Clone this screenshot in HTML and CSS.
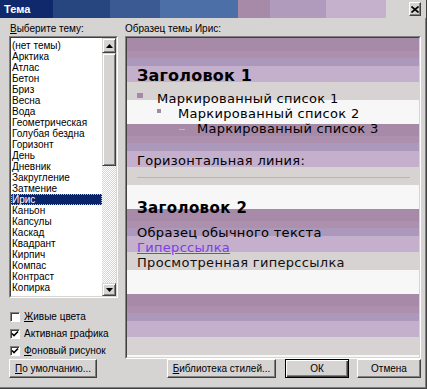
FILE: index.html
```html
<!DOCTYPE html>
<html lang="ru">
<head>
<meta charset="utf-8">
<title>Тема</title>
<link rel="stylesheet" href="styles.css">
</head>
<body>
<div class="window">
  <div class="titlebar">
    <span class="title">Тема</span>
    <span class="close"><svg width="8" height="7" viewBox="0 0 8 7"><path d="M0.5 0.5 L7.5 6.5 M7.5 0.5 L0.5 6.5" stroke="#000" stroke-width="1.6" fill="none"/></svg></span>
  </div>
  <div class="content">
    <div class="label label-left"><u>В</u>ыберите тему:</div>
    <div class="label">Образец темы Ирис:</div>

    <div class="left">
      <div class="listbox">
        <div class="listbox-inner">
          <ul class="items">
            <li>(нет темы)</li>
            <li>Арктика</li>
            <li>Атлас</li>
            <li>Бетон</li>
            <li>Бриз</li>
            <li>Весна</li>
            <li>Вода</li>
            <li>Геометрическая</li>
            <li>Голубая бездна</li>
            <li>Горизонт</li>
            <li>День</li>
            <li>Дневник</li>
            <li>Закругление</li>
            <li>Затмение</li>
            <li class="sel">Ирис</li>
            <li>Каньон</li>
            <li>Капсулы</li>
            <li>Каскад</li>
            <li>Квадрант</li>
            <li>Кирпич</li>
            <li>Компас</li>
            <li>Контраст</li>
            <li>Копирка</li>
          </ul>
          <div class="scrollbar">
            <div class="sb-btn sb-up"><svg width="7" height="4" viewBox="0 0 7 4"><path d="M3.5 0 L7 4 L0 4 Z" fill="#000"/></svg></div>
            <div class="sb-thumb"></div>
            <div class="sb-track"></div>
            <div class="sb-btn sb-down"><svg width="7" height="4" viewBox="0 0 7 4"><path d="M0 0 L7 0 L3.5 4 Z" fill="#000"/></svg></div>
          </div>
        </div>
      </div>
      <div class="checks">
        <div class="check"><span class="box"></span><span><u>Ж</u>ивые цвета</span></div>
        <div class="check"><span class="box"><svg width="8" height="8" viewBox="0 0 8 8"><path d="M1 3.5 L3 5.5 L7 1.5" stroke="#000" stroke-width="1.6" fill="none"/></svg></span><span>Активная <u>г</u>рафика</span></div>
        <div class="check"><span class="box"><svg width="8" height="8" viewBox="0 0 8 8"><path d="M1 3.5 L3 5.5 L7 1.5" stroke="#000" stroke-width="1.6" fill="none"/></svg></span><span><u>Ф</u>оновый рисунок</span></div>
      </div>
    </div>

    <div class="preview">
      <div class="preview-inner">
        <div class="h1">Заголовок 1</div>
        <div class="li li1"><span class="bullet"><i class="sq1"></i></span>Маркированный список 1</div>
        <div class="li li2"><span class="bullet"><i class="sq2"></i></span>Маркированный список 2</div>
        <div class="li li3"><span class="bullet"><i class="dash"></i></span>Маркированный список 3</div>
        <div class="hr-label">Горизонтальная линия:</div>
        <div class="hr"></div>
        <div class="h2">Заголовок 2</div>
        <div class="p">Образец обычного текста</div>
        <div class="p link">Гиперссылка</div>
        <div class="p visited">Просмотренная гиперссылка</div>
      </div>
    </div>

    <div class="bottom-left">
      <button class="btn btn-default-theme"><u>П</u>о умолчанию...</button>
    </div>
    <div class="bottom-right">
      <button class="btn btn-lib"><u>Б</u>иблиотека стилей...</button>
      <button class="btn btn-small is-default">ОК</button>
      <button class="btn btn-small">Отмена</button>
    </div>
  </div>
</div>
</body>
</html>
```

FILE: styles.css
```css
* {
  box-sizing: border-box;
  margin: 0;
  padding: 0;
}

html, body {
  width: 427px;
  height: 389px;
  overflow: hidden;
}

body {
  font-family: "Liberation Sans", Arial, sans-serif;
  font-size: 10px;
  color: #000;
  background: #d6d3d3;
}

.window {
  width: 427px;
  height: 389px;
  background: #d6d3d3;
  border-right: 1px solid #404040;
  border-bottom: 1px solid #404040;
  box-shadow: inset -1px -1px 0 #808080;
}

.titlebar {
  height: 18px;
  display: flex;
  align-items: center;
  padding: 0 5px 0 4px;
  background: linear-gradient(to right,
    #10296c 0 53px,
    #27457f 53px 110px,
    #3b5993 110px 160px,
    #4b6fa6 160px 238px,
    #a68aa8 238px 270px,
    #b09bbc 270px 326px,
    #c5b1cc 326px 386px,
    #d6d3d3 386px);
}

.title {
  color: #fff;
  font-weight: bold;
  font-size: 11px;
}

.close {
  margin-left: auto;
  width: 12px;
  height: 14px;
  display: flex;
  align-items: center;
  justify-content: center;
  background: #d6d3d3;
  border: 1px solid;
  border-color: #fff #404040 #404040 #fff;
  box-shadow: inset -1px -1px 0 #808080;
}

.content {
  display: grid;
  grid-template-columns: 109px 296px;
  grid-template-rows: 13px 323px 19px;
  column-gap: 7px;
  padding: 5px 0 0 9px;
}

.label {
  line-height: 12px;
  white-space: nowrap;
}

.label-left {
  padding-left: 1px;
}

.left {
  display: flex;
  flex-direction: column;
}

.listbox {
  height: 262px;
  display: flex;
  border: 1px solid;
  border-color: #808080 #fff #fff #808080;
}

.listbox-inner {
  flex: 1;
  display: flex;
  border: 1px solid;
  border-color: #404040 #d6d3d3 #d6d3d3 #404040;
  background: #fff;
}

.items {
  flex: 1;
  list-style: none;
  padding-top: 2px;
  overflow: hidden;
}

.items li {
  height: 11px;
  line-height: 11px;
  padding-left: 1px;
  white-space: nowrap;
}

.items li.sel {
  background: #0a246a;
  color: #fff;
  outline: 1px dotted #d8b860;
  outline-offset: -1px;
}

.scrollbar {
  width: 14px;
  display: flex;
  flex-direction: column;
}

.sb-btn {
  display: flex;
  align-items: center;
  justify-content: center;
  background: #d6d3d3;
  border: 1px solid;
  border-color: #d6d3d3 #404040 #404040 #d6d3d3;
  box-shadow: inset 1px 1px 0 #fff, inset -1px -1px 0 #808080;
}

.sb-up {
  height: 15px;
}

.sb-down {
  height: 13px;
}

.sb-thumb {
  height: 113px;
  background: #d6d3d3;
  border: 1px solid;
  border-color: #d6d3d3 #404040 #404040 #d6d3d3;
  box-shadow: inset 1px 1px 0 #fff, inset -1px -1px 0 #808080;
}

.sb-track {
  flex: 1;
  background-color: #fff;
  background-image: repeating-conic-gradient(#d6d3d3 0 25%, #fff 0 50%);
  background-size: 2px 2px;
}

.checks {
  margin-top: 10px;
  display: flex;
  flex-direction: column;
}

.check {
  height: 17px;
  display: flex;
  align-items: center;
  gap: 4px;
  padding-left: 1px;
  white-space: nowrap;
}

.box {
  width: 10px;
  height: 10px;
  display: flex;
  align-items: center;
  justify-content: center;
  background: #fff;
  border: 1px solid;
  border-color: #808080 #fff #fff #808080;
  box-shadow: inset 1px 1px 0 #404040;
}

.preview {
  border: 1px solid;
  border-color: #808080 #fff #fff #808080;
}

.preview-inner {
  height: 100%;
  border: 1px solid;
  border-color: #404040 #d6d3d3 #d6d3d3 #404040;
  padding: 0 9px 0 10px;
  font-family: "DejaVu Sans", Verdana, sans-serif;
  font-size: 13px;
  letter-spacing: 0.3px;
  color: #000;
  background:
    linear-gradient(#a68aa8, #a68aa8) 0 0 / 100% 1px no-repeat,
    repeating-linear-gradient(to bottom,
      #a68aa8 0 12px,
      #ad8fae 12px 19px,
      #ab98ba 19px 27px,
      #c4b0cc 27px 43px,
      #d8d3d3 43px 61px,
      #f7f7f7 61px 85px) 0 1px / 100% 85px repeat-y;
  overflow: hidden;
  white-space: nowrap;
}

.h1 {
  margin-top: 28px;
  line-height: 20px;
  font-size: 16px;
  font-weight: bold;
  letter-spacing: 0.2px;
}

.li {
  display: flex;
  line-height: 15px;
}

.li1 {
  margin-top: 5px;
}

.li2 {
  padding-left: 20px;
}

.li3 {
  padding-left: 42px;
}

.bullet {
  display: flex;
}

.li1 .bullet {
  width: 20px;
  padding-top: 2px;
}

.li2 .bullet {
  width: 21px;
  padding-top: 3px;
}

.li3 .bullet {
  width: 18px;
  padding-top: 8px;
}

.sq1 {
  width: 6px;
  height: 5px;
  background: #a48aa8;
}

.sq2 {
  width: 4px;
  height: 4px;
  background: #a48aa8;
}

.dash {
  width: 6px;
  height: 1px;
  background: #c6b4cc;
}

.hr-label {
  margin-top: 17px;
  line-height: 15px;
}

.hr {
  margin-top: 9px;
  height: 1px;
  background: #c0aec6;
}

.h2 {
  margin-top: 21px;
  line-height: 18px;
  font-size: 15px;
  font-weight: bold;
  letter-spacing: 0.4px;
}

.p {
  line-height: 15px;
}

.h2 + .p {
  margin-top: 8px;
}

.link {
  color: #7b3fe4;
  text-decoration: underline;
}

.visited {
  color: #111;
}

.bottom-left {
  display: flex;
}

.bottom-right {
  display: flex;
  justify-content: flex-end;
  gap: 8px;
}

.btn {
  height: 19px;
  font-family: "Liberation Sans", Arial, sans-serif;
  font-size: 10px;
  color: #000;
  background: #d6d3d3;
  border: 1px solid;
  border-color: #fff #404040 #404040 #fff;
  box-shadow: inset -1px -1px 0 #808080;
  white-space: nowrap;
}

.btn-default-theme {
  width: 88px;
}

.btn-lib {
  width: 109px;
  margin-right: 1px;
}

.btn-small {
  width: 64px;
}

.btn.is-default {
  border: 1px solid #000;
  box-shadow: inset 1px 1px 0 #fff, inset -1px -1px 0 #404040, inset -2px -2px 0 #808080;
}
```
